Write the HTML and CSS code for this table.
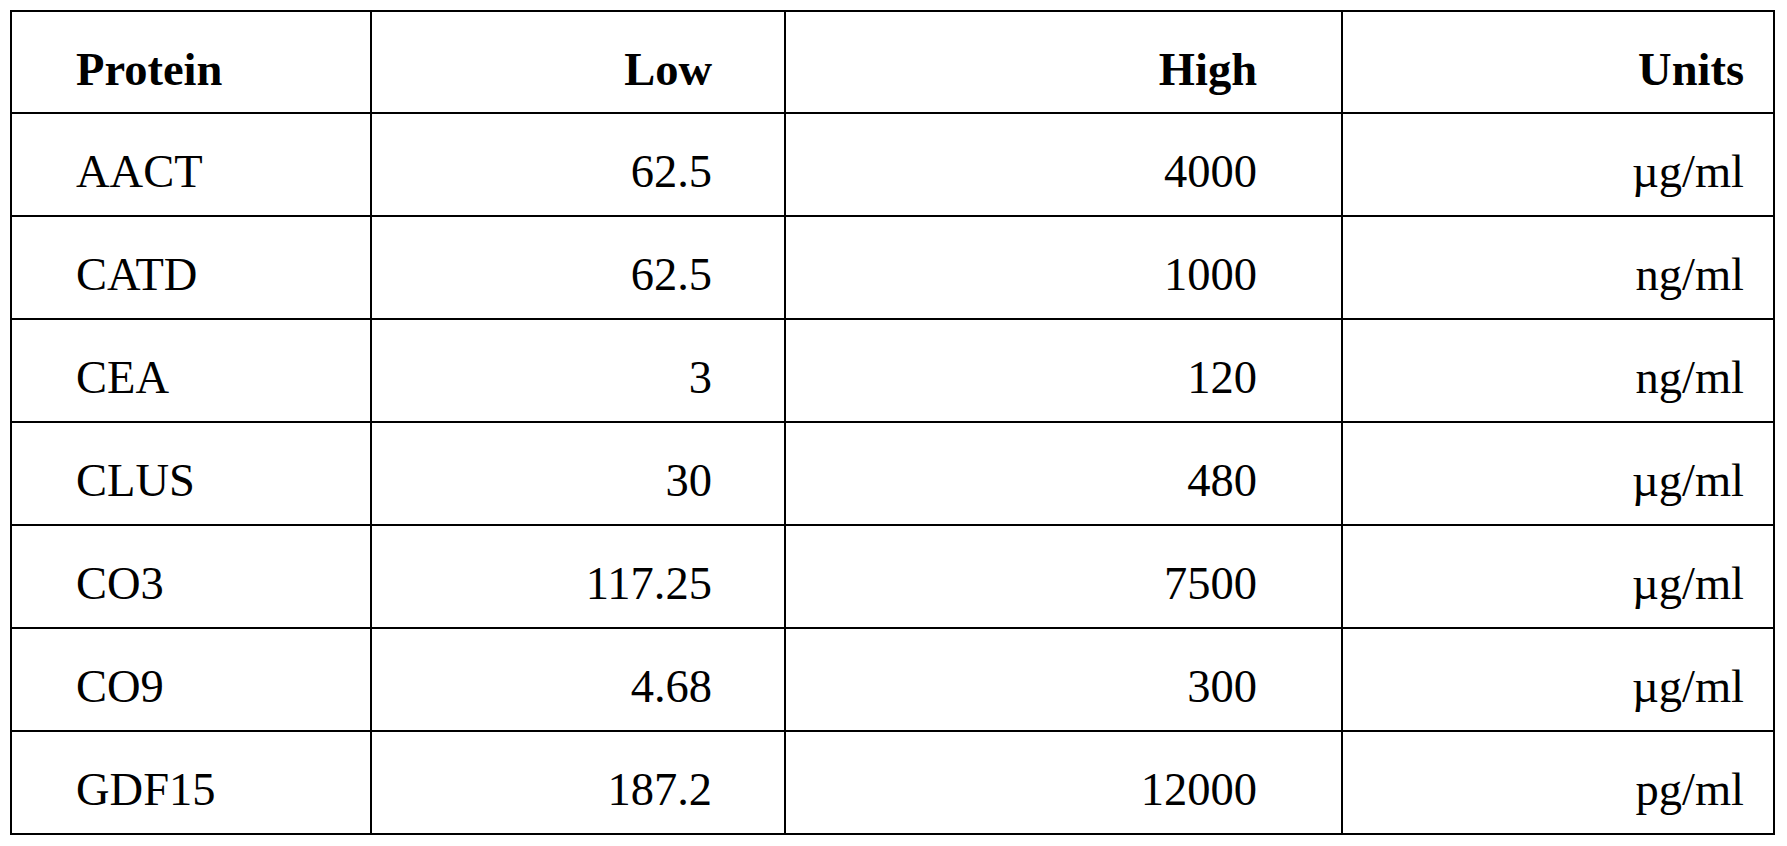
FILE: index.html
```html
<!DOCTYPE html>
<html lang="en">
<head>
<meta charset="utf-8">
<title>Protein ranges</title>
<link rel="stylesheet" href="styles.css">
</head>
<body>
<table class="ranges">
  <colgroup>
    <col class="c-protein">
    <col class="c-low">
    <col class="c-high">
    <col class="c-units">
  </colgroup>
  <thead>
    <tr>
      <th class="protein">Protein</th>
      <th class="low">Low</th>
      <th class="high">High</th>
      <th class="units">Units</th>
    </tr>
  </thead>
  <tbody>
    <tr><td class="protein">AACT</td><td class="low">62.5</td><td class="high">4000</td><td class="units">µg/ml</td></tr>
    <tr><td class="protein">CATD</td><td class="low">62.5</td><td class="high">1000</td><td class="units">ng/ml</td></tr>
    <tr><td class="protein">CEA</td><td class="low">3</td><td class="high">120</td><td class="units">ng/ml</td></tr>
    <tr><td class="protein">CLUS</td><td class="low">30</td><td class="high">480</td><td class="units">µg/ml</td></tr>
    <tr><td class="protein">CO3</td><td class="low">117.25</td><td class="high">7500</td><td class="units">µg/ml</td></tr>
    <tr><td class="protein">CO9</td><td class="low">4.68</td><td class="high">300</td><td class="units">µg/ml</td></tr>
    <tr><td class="protein">GDF15</td><td class="low">187.2</td><td class="high">12000</td><td class="units">pg/ml</td></tr>
  </tbody>
</table>
</body>
</html>
```

FILE: styles.css
```css
html, body {
  background: #ffffff;
}

body {
  margin: 10px;
  font-family: "Liberation Serif", "Times New Roman", serif;
  color: #000;
}

.ranges {
  border-collapse: collapse;
  table-layout: fixed;
  border: 2px solid #000;
  font-size: 46.5px;
  line-height: 51px;
}

.c-protein { width: 360px; }
.c-low { width: 414px; }
.c-high { width: 557px; }
.c-units { width: 432px; }

.ranges th,
.ranges td {
  border: 2px solid #000;
  padding: 32px 0 18px 0;
  white-space: nowrap;
  vertical-align: top;
}

.ranges th {
  font-weight: bold;
  padding-bottom: 17px;
}

.protein {
  text-align: left;
  padding-left: 64px !important;
}

.low {
  text-align: right;
  padding-right: 72px !important;
}

.high {
  text-align: right;
  padding-right: 84px !important;
}

.units {
  text-align: right;
  padding-right: 29px !important;
}
```
